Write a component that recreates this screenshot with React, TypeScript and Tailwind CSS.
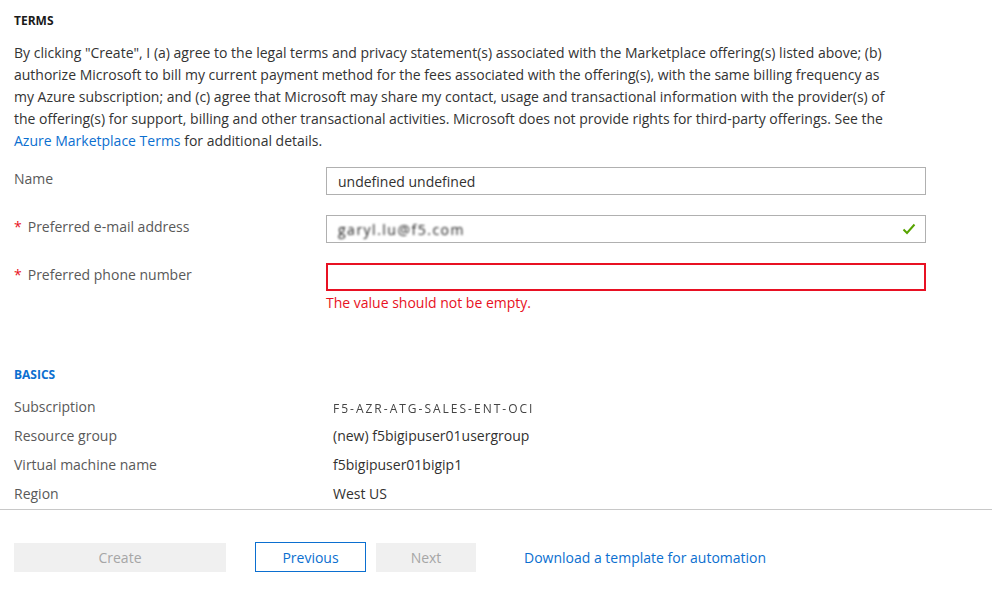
import React from "react";

const lines = [
  'By clicking "Create", I (a) agree to the legal terms and privacy statement(s) associated with the Marketplace offering(s) listed above; (b)',
  "authorize Microsoft to bill my current payment method for the fees associated with the offering(s), with the same billing frequency as",
  "my Azure subscription; and (c) agree that Microsoft may share my contact, usage and transactional information with the provider(s) of",
  "the offering(s) for support, billing and other transactional activities. Microsoft does not provide rights for third-party offerings. See the",
];

function Label({ text, required }: { text: string; required?: boolean }) {
  return (
    <div className="w-[312px] shrink-0 text-[14px] text-[#595959] leading-[20px] pt-[2px]">
      {required && <span className="text-[#e81123] mr-[6px]">*</span>}
      {text}
    </div>
  );
}

function Summary({ label, value, blur }: { label: string; value: string; blur?: boolean }) {
  return (
    <div className="flex h-[29px] items-center">
      <div className="w-[319px] shrink-0 text-[14px] text-[#595959]">{label}</div>
      <div className={blur ? "text-[12px] text-[#444] tracking-[2px] blur-[0.6px] mt-[4px]" : "text-[14px] text-[#323130]"}>
        {value}
      </div>
    </div>
  );
}

export default function App() {
  return (
    <div className="w-[992px] h-[602px] bg-white overflow-hidden" style={{ fontFamily: '"Open Sans", "Noto Sans", sans-serif' }}>
      <div className="px-[14px] pt-[13px]">
        <div className="text-[12px] font-bold text-[#1a1a1a] leading-[16px]">TERMS</div>
        <div className="mt-[13px] text-[14px] leading-[22px] text-[#333] whitespace-nowrap">
          {lines.map((l, i) => (
            <div key={i}>{l}</div>
          ))}
          <div>
            <span className="text-[#0b6fd0]">Azure Marketplace Terms</span> for additional details.
          </div>
        </div>

        <div className="mt-[15px] flex flex-col">
          <div className="flex">
            <Label text="Name" />
            <div className="w-[600px] h-[28px] border border-[#b0b0b0] flex items-center px-[11px] text-[14px] text-[#323130]">
              undefined undefined
            </div>
          </div>
          <div className="flex mt-[20px]">
            <Label text="Preferred e-mail address" required />
            <div className="w-[600px] h-[28px] border border-[#b0b0b0] flex items-center justify-between px-[11px] text-[14px] text-[#323130]">
              <span className="blur-[0.8px] tracking-[1.5px] text-[14px] text-[#222]">garyl.lu@f5.com</span>
              <svg width="14" height="12" viewBox="0 0 14 12" className="mr-[-2px]">
                <path d="M1.5 6.5 L5 10 L12.5 1.5" stroke="#57a300" strokeWidth="2" fill="none" />
              </svg>
            </div>
          </div>
          <div className="flex mt-[20px]">
            <Label text="Preferred phone number" required />
            <div>
              <div className="w-[600px] h-[28px] border-2 border-[#e81123]" />
              <div className="text-[14px] text-[#e81123] leading-[20px] mt-[2px]">The value should not be empty.</div>
            </div>
          </div>
        </div>

        <div className="mt-[54px] text-[12px] font-bold text-[#0b6fd0] leading-[16px]">BASICS</div>
        <div className="mt-[9px]">
          <Summary label="Subscription" value="F5-AZR-ATG-SALES-ENT-OCI" blur />
          <Summary label="Resource group" value="(new) f5bigipuser01usergroup" />
          <Summary label="Virtual machine name" value="f5bigipuser01bigip1" />
          <Summary label="Region" value="West US" />
        </div>
      </div>
      <div className="mt-[1px] border-t border-[#c8c8c8]" />
      <div className="flex items-center px-[14px] pt-[32px] text-[14px]">
        <div className="w-[212px] h-[29px] bg-[#f0f0f0] text-[#a6a6a6] flex items-center justify-center">Create</div>
        <div className="ml-[29px] w-[111px] h-[30px] border border-[#0b6fd0] text-[#0b6fd0] flex items-center justify-center">Previous</div>
        <div className="ml-[10px] w-[100px] h-[29px] bg-[#f0f0f0] text-[#a6a6a6] flex items-center justify-center">Next</div>
        <div className="ml-[48px] text-[#0b6fd0]">Download a template for automation</div>
      </div>
    </div>
  );
}
